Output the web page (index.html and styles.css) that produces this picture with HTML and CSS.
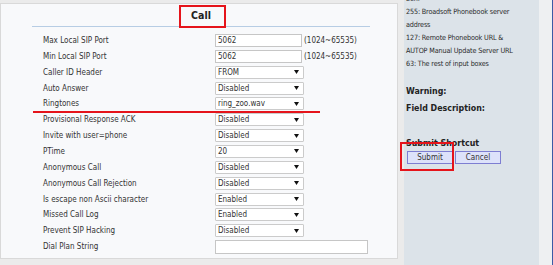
FILE: index.html
```html
<!DOCTYPE html>
<html lang="en">
<head>
    <meta charset="UTF-8">
    <title>Account - Call</title>
    <link rel="stylesheet" href="styles.css">
</head>
<body>
    <div class="page">
        <div class="main">
            <div class="form">
                <div class="title">Call</div>
                <div class="rows">
                    <div class="row"><span class="label">Max Local SIP Port</span><div class="field"><input class="text" type="text" value="5062"><span class="hint">(1024~65535)</span></div></div>
                    <div class="row"><span class="label">Min Local SIP Port</span><div class="field"><input class="text" type="text" value="5062"><span class="hint">(1024~65535)</span></div></div>
                    <div class="row"><span class="label">Caller ID Header</span><div class="field"><div class="select"><span>FROM</span><svg class="arrow" width="5" height="4" viewBox="0 0 5 4"><polygon points="0,0 5,0 2.5,4"/></svg></div></div></div>
                    <div class="row"><span class="label">Auto Answer</span><div class="field"><div class="select"><span>Disabled</span><svg class="arrow" width="5" height="4" viewBox="0 0 5 4"><polygon points="0,0 5,0 2.5,4"/></svg></div></div></div>
                    <div class="row"><span class="label">Ringtones</span><div class="field"><div class="select"><span>ring_zoo.wav</span><svg class="arrow" width="5" height="4" viewBox="0 0 5 4"><polygon points="0,0 5,0 2.5,4"/></svg></div></div></div>
                    <div class="row"><span class="label">Provisional Response ACK</span><div class="field"><div class="select"><span>Disabled</span><svg class="arrow" width="5" height="4" viewBox="0 0 5 4"><polygon points="0,0 5,0 2.5,4"/></svg></div></div></div>
                    <div class="row"><span class="label">Invite with user=phone</span><div class="field"><div class="select"><span>Disabled</span><svg class="arrow" width="5" height="4" viewBox="0 0 5 4"><polygon points="0,0 5,0 2.5,4"/></svg></div></div></div>
                    <div class="row"><span class="label">PTime</span><div class="field"><div class="select"><span>20</span><svg class="arrow" width="5" height="4" viewBox="0 0 5 4"><polygon points="0,0 5,0 2.5,4"/></svg></div></div></div>
                    <div class="row"><span class="label">Anonymous Call</span><div class="field"><div class="select"><span>Disabled</span><svg class="arrow" width="5" height="4" viewBox="0 0 5 4"><polygon points="0,0 5,0 2.5,4"/></svg></div></div></div>
                    <div class="row"><span class="label">Anonymous Call Rejection</span><div class="field"><div class="select"><span>Disabled</span><svg class="arrow" width="5" height="4" viewBox="0 0 5 4"><polygon points="0,0 5,0 2.5,4"/></svg></div></div></div>
                    <div class="row"><span class="label">Is escape non Ascii character</span><div class="field"><div class="select"><span>Enabled</span><svg class="arrow" width="5" height="4" viewBox="0 0 5 4"><polygon points="0,0 5,0 2.5,4"/></svg></div></div></div>
                    <div class="row"><span class="label">Missed Call Log</span><div class="field"><div class="select"><span>Enabled</span><svg class="arrow" width="5" height="4" viewBox="0 0 5 4"><polygon points="0,0 5,0 2.5,4"/></svg></div></div></div>
                    <div class="row"><span class="label">Prevent SIP Hacking</span><div class="field"><div class="select"><span>Disabled</span><svg class="arrow" width="5" height="4" viewBox="0 0 5 4"><polygon points="0,0 5,0 2.5,4"/></svg></div></div></div>
                    <div class="row"><span class="label">Dial Plan String</span><div class="field"><input class="text wide" type="text" value=""></div></div>
                </div>
            </div>
        </div>

        <div class="side">
            <div class="notes">
                ben.<br>
                255: Broadsoft Phonebook server<br>
                address<br>
                127: Remote Phonebook URL &amp;<br>
                AUTOP Manual Update Server URL<br>
                63: The rest of input boxes
            </div>
            <h3 class="warn">Warning:</h3>
            <h3 class="desc">Field Description:</h3>
            <h3 class="shortcut">Submit Shortcut</h3>
            <div class="buttons">
                <button class="btn">Submit</button>
                <button class="btn">Cancel</button>
            </div>
        </div>

        <div class="edge"></div>
    </div>

    <!-- red annotation marks -->
    <div class="mark mark-title"></div>
    <div class="mark mark-line"></div>
    <div class="mark mark-submit"></div>
</body>
</html>
```

FILE: styles.css
```css
body {
    margin: 0;
    background-color: #ebebeb;
    font-family: "DejaVu Sans Condensed", "DejaVu Sans", sans-serif;
    color: #333;
    overflow: hidden;
}

.page {
    display: flex;
    height: 265px;
}

.main {
    box-sizing: border-box;
    width: 398px;
    height: 256px;
    margin-top: 3px;
    background-color: #f8f9fb;
    border: 1px solid #d9d9d9;
}

.form {
    width: 338px;
    margin-left: 31px;
}

.title {
    height: 22px;
    line-height: 22px;
    text-align: center;
    font-size: 10.5px;
    font-weight: bold;
    color: #222;
    border-bottom: 1px solid #b7cde4;
}

.rows {
    padding-top: 5.5px;
}

.row {
    display: grid;
    grid-template-columns: 172px 1fr;
    align-items: center;
    height: 15.87px;
    padding-left: 11px;
    font-size: 8px;
}

.field {
    display: flex;
    align-items: center;
    gap: 2px;
}

.text {
    box-sizing: border-box;
    width: 87px;
    height: 13px;
    padding: 0 2px;
    margin: 0;
    border: 1px solid #c6c6c6;
    background-color: #fff;
    font-family: inherit;
    font-size: 8px;
    color: #333;
}

.text.wide {
    width: 153px;
    height: 14px;
}

.hint {
    color: #333;
}

.select {
    box-sizing: border-box;
    width: 89px;
    height: 13px;
    display: flex;
    align-items: center;
    justify-content: space-between;
    padding: 0 4px 0 2px;
    border: 1px solid #cbcbcb;
    border-radius: 1px;
    background-color: #fff;
}

.arrow {
    fill: #111;
}

.side {
    box-sizing: border-box;
    width: 135px;
    margin-left: 6px;
    padding-left: 2px;
    background-color: #dce3e9;
    font-size: 7.2px;
    color: #2b2b2b;
}

.notes {
    margin-top: -7px;
    line-height: 12.9px;
    letter-spacing: -0.15px;
    white-space: nowrap;
}

.side h3 {
    margin: 0;
    height: 10px;
    line-height: 10px;
    font-size: 8.8px;
    font-weight: bold;
    color: #222;
}

.warn {
    margin-top: 15.5px !important;
}

.desc {
    margin-top: 7px !important;
}

.shortcut {
    margin-top: 25px !important;
}

.buttons {
    display: flex;
    gap: 2px;
    margin-top: 3px;
    padding-left: 1px;
}

.btn {
    box-sizing: border-box;
    width: 46px;
    height: 13px;
    padding: 0;
    border: 1px solid #7e7ed2;
    background-color: #dde2fa;
    font-family: inherit;
    font-size: 8px;
    color: #333;
}

.edge {
    width: 13px;
    background-color: #eef0f2;
    border-right: 1px solid #3b5ba5;
}

.mark {
    position: absolute;
    box-sizing: border-box;
}

.mark-title {
    left: 179px;
    top: 5px;
    width: 47px;
    height: 23px;
    border: 2px solid #e5141b;
}

.mark-line {
    left: 33px;
    top: 111px;
    width: 287px;
    height: 2px;
    background-color: #e5141b;
}

.mark-submit {
    left: 400px;
    top: 142px;
    width: 54px;
    height: 29px;
    border: 2px solid #e5141b;
}
```
